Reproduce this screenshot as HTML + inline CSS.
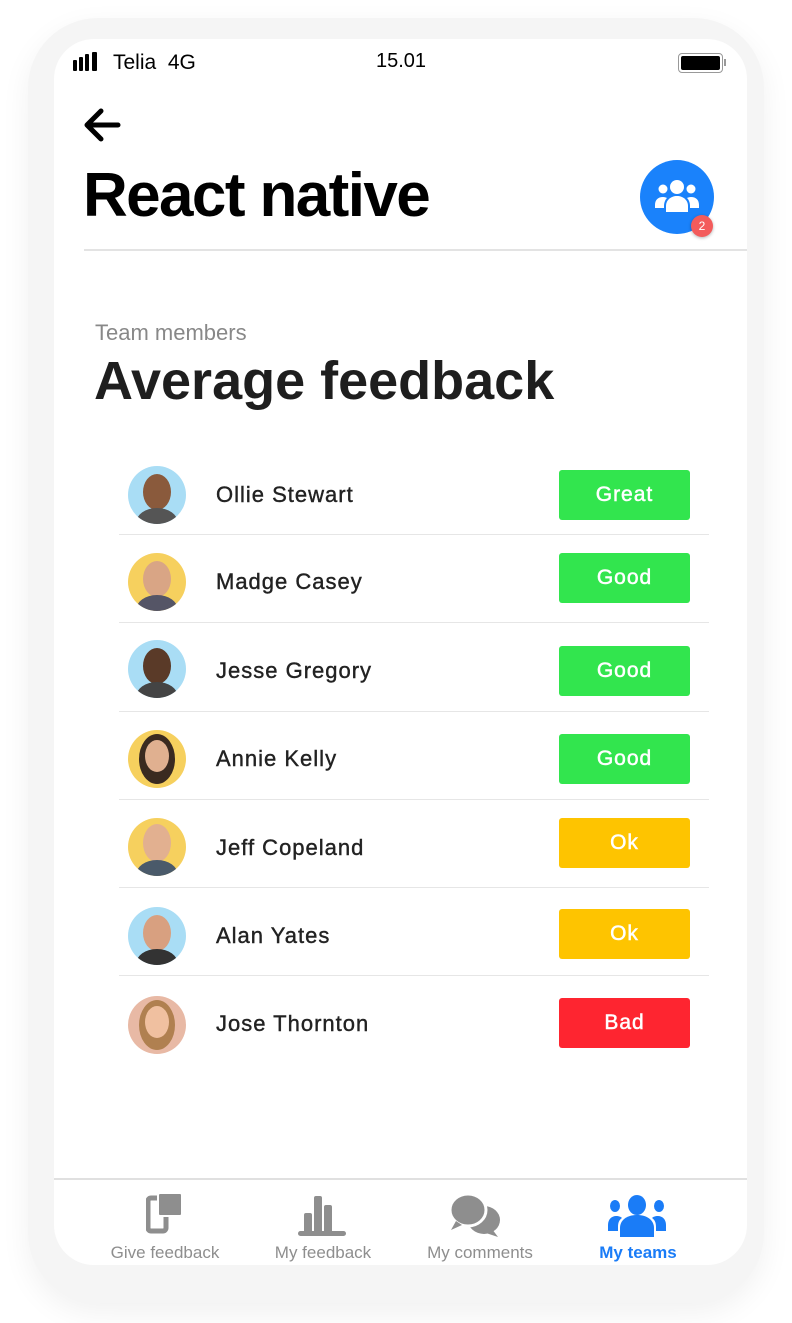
<!DOCTYPE html>
<html><head><meta charset="utf-8"><style>
*{margin:0;padding:0;box-sizing:border-box}
body{width:792px;height:1323px;background:#fff;position:relative;font-family:"Liberation Sans",sans-serif;overflow:hidden}
.outer{position:absolute;left:28px;top:18px;width:736px;height:1285px;border-radius:70px;background:#f5f5f5;box-shadow:0 10px 30px rgba(0,0,0,0.06)}
.screen{position:absolute;left:54px;top:39px;width:693px;height:1226px;border-radius:40px;background:#fff;overflow:hidden}
.abs{position:absolute}
.row{position:absolute;left:119px;width:590px;height:88px;border-bottom:1.5px solid #e6e6e6}
.av{position:absolute;left:9px;width:58px;height:58px;border-radius:50%;overflow:hidden}
.name{position:absolute;left:97px;font-size:22px;color:#222;letter-spacing:1px;-webkit-text-stroke:0.4px #222}
.badge{position:absolute;left:440px;width:131px;height:50px;border-radius:3px;color:#fff;font-size:21px;text-align:center;line-height:50px;letter-spacing:1px;-webkit-text-stroke:0.5px #fff}
.tab{position:absolute;top:1243px;font-size:17px;color:#8e8e8e;text-align:center;width:160px}
</style></head><body>
<div class="outer"></div>
<div class="screen"></div>
<div class="abs" style="left:73px;top:60px;width:4px;height:11px;background:#000;border-radius:1px"></div>
<div class="abs" style="left:79px;top:57px;width:4px;height:14px;background:#000;border-radius:1px"></div>
<div class="abs" style="left:85px;top:54px;width:4px;height:17px;background:#000;border-radius:1px"></div>
<div class="abs" style="left:92px;top:52px;width:5px;height:19px;background:#000;border-radius:1px"></div>
<div class="abs" style="left:113px;top:51px;font-size:21px;color:#000">Telia&nbsp; 4G</div>
<div class="abs" style="left:376px;top:50px;font-size:20px;color:#000">15.01</div>
<div class="abs" style="left:678px;top:53px;width:45px;height:20px;border:1.5px solid #999;border-radius:4px;padding:2px"><div style="width:100%;height:100%;background:#000;border-radius:2px"></div></div>
<div class="abs" style="left:724px;top:59px;width:2px;height:7px;background:#999"></div>
<svg class="abs" style="left:82px;top:106px" width="42" height="38" viewBox="0 0 42 38"><path d="M36 19H6M19 5L5 19l14 14" stroke="#000" stroke-width="5" fill="none" stroke-linecap="round" stroke-linejoin="round"/></svg>
<div class="abs" style="left:83px;top:160px;font-size:62px;font-weight:bold;color:#000;letter-spacing:-1.6px">React native</div>
<div class="abs" style="left:640px;top:160px;width:74px;height:74px;border-radius:50%;background:#1a82fb"></div>
<svg class="abs" style="left:652px;top:176px" width="50" height="42" viewBox="0 0 50 42"><g fill="#fff"><circle cx="25" cy="11" r="7"/><circle cx="11" cy="13" r="4.5"/><circle cx="39" cy="13" r="4.5"/><path d="M14 36v-6c0-6 5-10 11-10s11 4 11 10v6z"/><path d="M3 32v-3c0-5 3-8 8-8 2 0 3 .5 4 1-2 2-3 5-3 8v2z"/><path d="M47 32v-3c0-5-3-8-8-8-2 0-3 .5-4 1 2 2 3 5 3 8v2z"/></g></svg>
<div class="abs" style="left:691px;top:215px;width:22px;height:22px;border-radius:50%;background:#f35b5b;color:#fff;font-size:12px;text-align:center;line-height:22px;box-shadow:0 1px 3px rgba(0,0,0,.3)">2</div>
<div class="abs" style="left:84px;top:249px;width:663px;height:2px;background:#e3e3e3"></div>
<div class="abs" style="left:95px;top:320px;font-size:22px;color:#888">Team members</div>
<div class="abs" style="left:94px;top:350px;font-size:54px;font-weight:bold;color:#1e1e1e">Average feedback</div>

<div class="row" style="top:447px"><div class="av" style="top:19px;background:#a9ddf5"><div style="position:absolute;left:15px;top:8px;width:28px;height:36px;border-radius:50%;background:#8a5a3c"></div><div style="position:absolute;left:8px;top:42px;width:42px;height:30px;border-radius:50%;background:#555"></div></div><div class="name" style="top:35px">Ollie Stewart</div><div class="badge" style="top:23px;background:#32e54e">Great</div></div>
<div class="row" style="top:535px"><div class="av" style="top:18px;background:#f6d05e"><div style="position:absolute;left:15px;top:8px;width:28px;height:36px;border-radius:50%;background:#d9a585"></div><div style="position:absolute;left:8px;top:42px;width:42px;height:30px;border-radius:50%;background:#556"></div></div><div class="name" style="top:34px">Madge Casey</div><div class="badge" style="top:18px;background:#32e54e">Good</div></div>
<div class="row" style="top:624px"><div class="av" style="top:16px;background:#a9ddf5"><div style="position:absolute;left:15px;top:8px;width:28px;height:36px;border-radius:50%;background:#5a3a28"></div><div style="position:absolute;left:8px;top:42px;width:42px;height:30px;border-radius:50%;background:#444"></div></div><div class="name" style="top:34px">Jesse Gregory</div><div class="badge" style="top:22px;background:#32e54e">Good</div></div>
<div class="row" style="top:712px"><div class="av" style="top:18px;background:#f6d05e"><div style="position:absolute;left:11px;top:4px;width:36px;height:50px;border-radius:50%;background:#3a2a20"></div><div style="position:absolute;left:17px;top:10px;width:24px;height:32px;border-radius:50%;background:#e0b090"></div></div><div class="name" style="top:34px">Annie Kelly</div><div class="badge" style="top:22px;background:#32e54e">Good</div></div>
<div class="row" style="top:800px"><div class="av" style="top:18px;background:#f6d05e"><div style="position:absolute;left:15px;top:6px;width:28px;height:38px;border-radius:50%;background:#e2b090"></div><div style="position:absolute;left:8px;top:42px;width:42px;height:30px;border-radius:50%;background:#4a5a6a"></div></div><div class="name" style="top:35px">Jeff Copeland</div><div class="badge" style="top:18px;background:#fec400">Ok</div></div>
<div class="row" style="top:888px"><div class="av" style="top:19px;background:#a9ddf5"><div style="position:absolute;left:15px;top:8px;width:28px;height:36px;border-radius:50%;background:#d8a080"></div><div style="position:absolute;left:8px;top:42px;width:42px;height:30px;border-radius:50%;background:#333"></div></div><div class="name" style="top:35px">Alan Yates</div><div class="badge" style="top:21px;background:#fec400">Ok</div></div>
<div class="row" style="top:976px;border:none"><div class="av" style="top:20px;background:#e8b9a5"><div style="position:absolute;left:11px;top:4px;width:36px;height:50px;border-radius:50%;background:#b08050"></div><div style="position:absolute;left:17px;top:10px;width:24px;height:32px;border-radius:50%;background:#f0c0a0"></div></div><div class="name" style="top:35px">Jose Thornton</div><div class="badge" style="top:22px;background:#fe2530">Bad</div></div>

<div class="abs" style="left:54px;top:1178px;width:693px;height:2px;background:#e0e0e0"></div>
<svg class="abs" style="left:146px;top:1192px" width="40" height="42" viewBox="0 0 40 42"><rect x="2" y="6" width="18" height="33" rx="3" fill="none" stroke="#8e8e8e" stroke-width="5"/><rect x="12" y="1" width="24" height="23" rx="2" fill="#8e8e8e" stroke="#fff" stroke-width="2"/></svg>
<svg class="abs" style="left:296px;top:1193px" width="52" height="44" viewBox="0 0 52 44"><rect x="8" y="20" width="8" height="20" rx="2" fill="#8e8e8e"/><rect x="18" y="3" width="8" height="37" rx="2" fill="#8e8e8e"/><rect x="28" y="12" width="8" height="28" rx="2" fill="#8e8e8e"/><rect x="2" y="38" width="48" height="5" rx="2.5" fill="#8e8e8e"/></svg>
<svg class="abs" style="left:448px;top:1193px" width="56" height="44" viewBox="0 0 56 44"><ellipse cx="36" cy="27" rx="16" ry="14" fill="#8e8e8e"/><path d="M44 36l6 8-12-4z" fill="#8e8e8e"/><ellipse cx="20" cy="17" rx="18" ry="16" fill="#8e8e8e" stroke="#fff" stroke-width="3"/><path d="M8 28l-5 9 11-5z" fill="#8e8e8e"/></svg>
<svg class="abs" style="left:606px;top:1195px" width="62" height="42" viewBox="0 0 62 42"><g fill="#1a7cf7"><ellipse cx="31" cy="10" rx="9" ry="10"/><ellipse cx="9" cy="11" rx="5" ry="6"/><ellipse cx="53" cy="11" rx="5" ry="6"/><path d="M14 42V33c0-8 7-13 17-13s17 5 17 13v9z"/><path d="M2 36v-6c0-6 4-9 8-9 3 0 5 1 6 2-3 2-4 5-4 9v4z"/><path d="M60 36v-6c0-6-4-9-8-9-3 0-5 1-6 2 3 2 4 5 4 9v4z"/></g></svg>
<div class="tab" style="left:85px">Give feedback</div>
<div class="tab" style="left:243px">My feedback</div>
<div class="tab" style="left:400px">My comments</div>
<div class="tab" style="left:558px;color:#1a7cf7;font-weight:bold">My teams</div>
</body></html>
